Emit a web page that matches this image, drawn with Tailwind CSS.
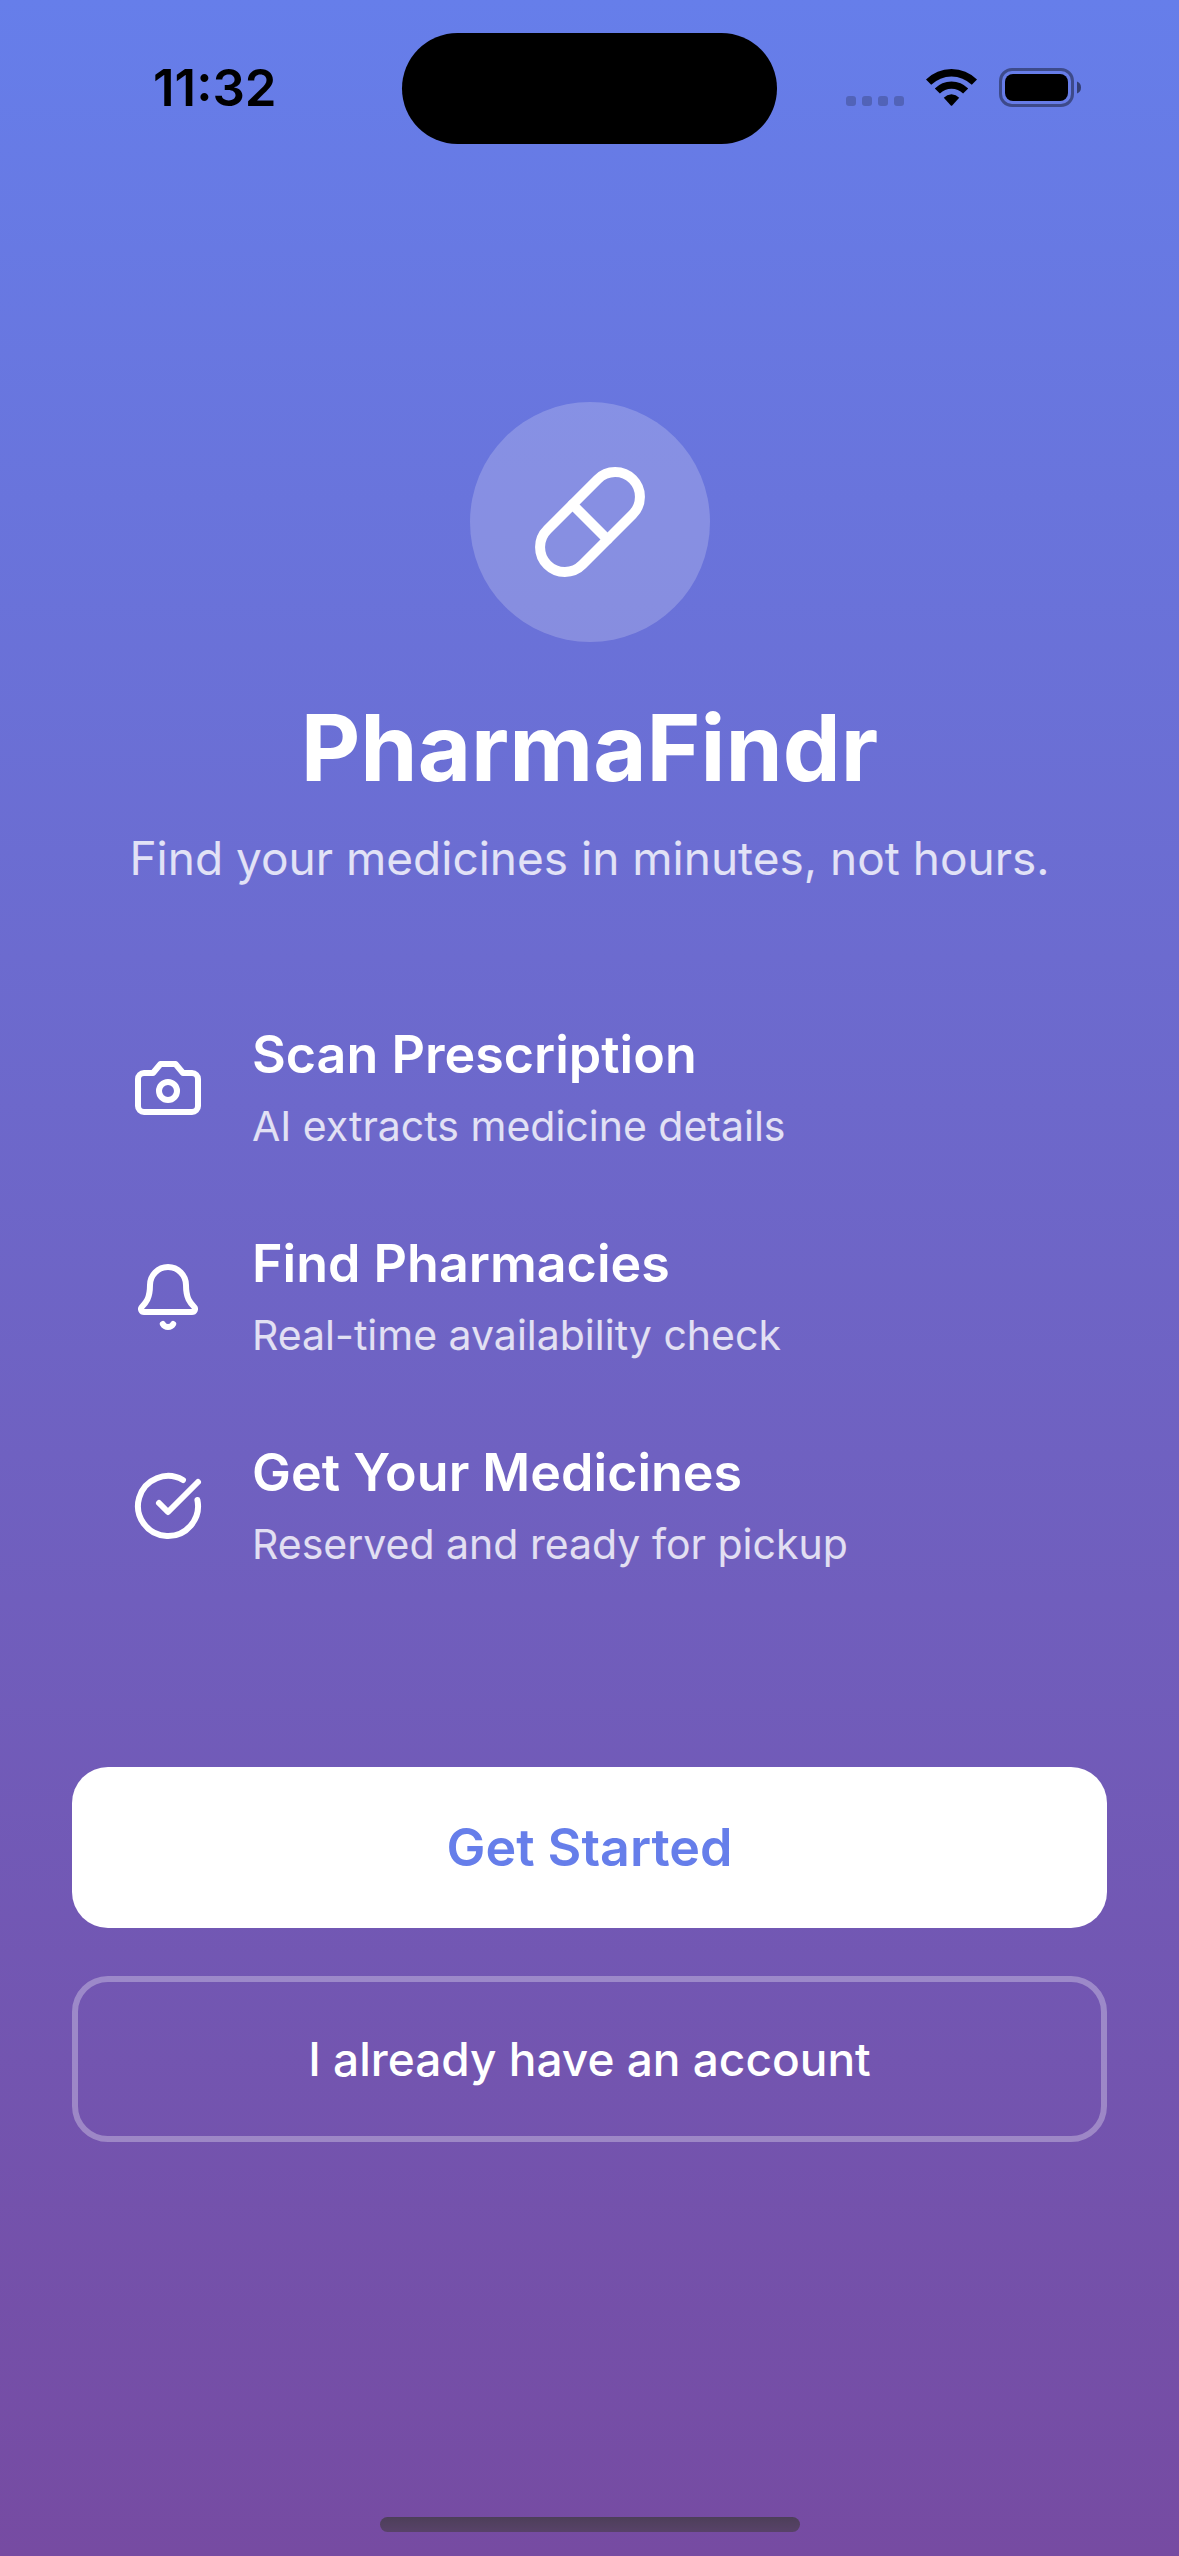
<!DOCTYPE html>
<html lang="en">
<head>
<meta charset="utf-8">
<meta name="viewport" content="width=device-width, initial-scale=1">
<title>PharmaFindr</title>
<script src="https://cdn.jsdelivr.net/npm/@tailwindcss/browser@4"></script>
</head>
<body class="flex min-h-screen flex-col bg-[linear-gradient(to_bottom,#667eea,#764ba2)] bg-no-repeat font-['Inter',sans-serif] text-white">
  <!-- Status bar -->
  <header class="grid grid-cols-[1fr_auto_1fr] items-center pt-[33px] text-black">
    <time class="pb-0.5 pl-[153px] text-[51px] leading-[60px] font-semibold">11:32</time>
    <div class="h-[111px] w-[375px] rounded-full bg-black"></div>
    <div class="flex items-center justify-end pr-[98px] pb-0.5">
      <svg class="h-10 w-[58px]" viewBox="0 0 58 40" fill="#000" fill-opacity=".2" aria-hidden="true">
        <rect x="0" y="28" width="10" height="10" rx="3"/><rect x="16" y="28" width="10" height="10" rx="3"/><rect x="32" y="28" width="10" height="10" rx="3"/><rect x="48" y="28" width="10" height="10" rx="3"/>
      </svg>
      <svg class="ml-[22px] h-10 w-[51px]" viewBox="0 0 51 40" aria-hidden="true">
        <path d="M25.500 1.000A36.500 36.500 0 0 1 51 11.600L45.800 16.800A29.200 29.200 0 0 0 5.200 16.800L0 11.600A36.500 36.500 0 0 1 25.500 1Z"/>
        <path d="M25.500 13.400A24 24 0 0 1 42.200 20.400L37.100 25.600A16.600 16.600 0 0 0 13.900 25.600L8.800 20.400A24 24 0 0 1 25.500 13.400Z"/>
        <path d="M25.500 26.200A11.500 11.500 0 0 1 33.200 29.700L26.200 37.500Q25.500 38.200 24.800 37.500L17.800 29.700A11.500 11.500 0 0 1 25.500 26.200Z"/>
      </svg>
      <svg class="ml-[22px] h-10 w-[82px]" viewBox="0 0 82 40" aria-hidden="true">
        <rect x="1.500" y="1.500" width="72" height="36" rx="11.500" fill="none" stroke="#000" stroke-opacity=".4" stroke-width="3"/>
        <rect x="6" y="6" width="63" height="27" rx="8"/>
        <path d="M78 13.500Q82 15 82 19.500T78 25.500Z" fill-opacity=".5"/>
      </svg>
    </div>
  </header>

  <main class="flex flex-1 flex-col px-[72px] pt-[258px]">
    <div class="flex size-60 items-center justify-center self-center rounded-full bg-white/20">
      <svg class="size-[120px]" viewBox="0 0 24 24" fill="none" stroke="currentColor" stroke-width="2" stroke-linecap="round" stroke-linejoin="round" aria-hidden="true">
        <path d="m10.500 20.500 10-10a4.950 4.950 0 1 0-7-7l-10 10a4.950 4.950 0 1 0 7 7Z"/><path d="m8.500 8.500 7 7"/>
      </svg>
    </div>
    <h1 class="mt-12 text-center text-[92px] leading-[116px] font-bold">PharmaFindr</h1>
    <p class="mt-6 text-center text-[46px] leading-[56px] text-white/80">Find your medicines in minutes, not hours.</p>

    <ul class="mt-[137px] flex flex-col gap-[79px] px-[60px]">
      <li class="flex items-center gap-12">
        <svg class="size-[72px] shrink-0" viewBox="0 0 24 24" fill="none" stroke="currentColor" stroke-width="2" stroke-linecap="round" stroke-linejoin="round" aria-hidden="true">
          <path d="M14.500 4h-5L7 7H4a2 2 0 0 0-2 2v9a2 2 0 0 0 2 2h16a2 2 0 0 0 2-2V9a2 2 0 0 0-2-2h-3l-2.500-3z"/><circle cx="12" cy="13" r="3"/>
        </svg>
        <div class="flex flex-col gap-[14px] pb-0.5">
          <h2 class="text-[52px] leading-[64px] font-semibold">Scan Prescription</h2>
          <p class="text-[41px] leading-[50px] text-white/80">AI extracts medicine details</p>
        </div>
      </li>
      <li class="flex items-center gap-12">
        <svg class="size-[72px] shrink-0" viewBox="0 0 24 24" fill="none" stroke="currentColor" stroke-width="2" stroke-linecap="round" stroke-linejoin="round" aria-hidden="true">
          <path d="M10.268 21a2 2 0 0 0 3.464 0"/><path d="M3.262 15.326A1 1 0 0 0 4 17h16a1 1 0 0 0 .74-1.673C19.410 13.956 18 12.499 18 8A6 6 0 0 0 6 8c0 4.499-1.411 5.956-2.738 7.326"/>
        </svg>
        <div class="flex flex-col gap-[14px] pb-0.5">
          <h2 class="text-[52px] leading-[64px] font-semibold">Find Pharmacies</h2>
          <p class="text-[41px] leading-[50px] text-white/80">Real-time availability check</p>
        </div>
      </li>
      <li class="flex items-center gap-12">
        <svg class="size-[72px] shrink-0" viewBox="0 0 24 24" fill="none" stroke="currentColor" stroke-width="2" stroke-linecap="round" stroke-linejoin="round" aria-hidden="true">
          <path d="M21.801 10A10 10 0 1 1 17 3.335"/><path d="m9 11 3 3L22 4"/>
        </svg>
        <div class="flex flex-col gap-[14px] pb-0.5">
          <h2 class="text-[52px] leading-[64px] font-semibold">Get Your Medicines</h2>
          <p class="text-[41px] leading-[50px] text-white/80">Reserved and ready for pickup</p>
        </div>
      </li>
    </ul>

    <div class="mt-[196px] flex flex-col gap-12">
      <button type="button" class="rounded-[36px] bg-white py-12 text-[52px] leading-[65px] font-semibold text-[#667eea]">Get Started</button>
      <button type="button" class="rounded-[36px] border-6 border-white/30 py-12 text-[46px] leading-[58px] font-medium">I already have an account</button>
    </div>
  </main>

  <!-- Home indicator -->
  <footer class="flex justify-center pb-6">
    <div class="h-[15px] w-[420px] rounded-full bg-linear-to-b from-[#4d3f59] to-[#584269]"></div>
  </footer>
</body>
</html>
